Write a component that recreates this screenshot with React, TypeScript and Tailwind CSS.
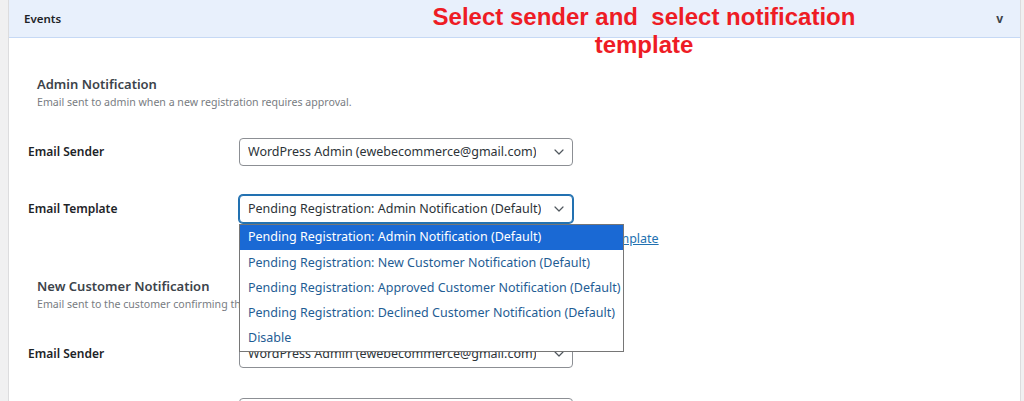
import { ChevronDown } from "lucide-react";

const templates = [
  "Pending Registration: Admin Notification (Default)",
  "Pending Registration: New Customer Notification (Default)",
  "Pending Registration: Approved Customer Notification (Default)",
  "Pending Registration: Declined Customer Notification (Default)",
  "Disable",
];

const font = { fontFamily: '"Noto Sans", "Open Sans", sans-serif' };

function Select({
  value,
  focused = false,
  children,
}: {
  value: string;
  focused?: boolean;
  children?: React.ReactNode;
}) {
  return (
    <div className="relative">
      <div
        className={`flex h-[28px] w-[334px] items-center justify-between rounded-[4px] border bg-white pr-[5px] pl-[8px] text-[12.5px] text-[#2c3338] ${
          focused ? "border-[#2271b1] shadow-[0_0_0_1px_#2271b1]" : "border-[#8c8f94]"
        }`}
      >
        <span className="truncate">{value}</span>
        <ChevronDown size={16} strokeWidth={1.8} className="shrink-0 text-[#50575e]" />
      </div>
      {children}
    </div>
  );
}

function Row({
  label,
  className = "",
  children,
}: {
  label: string;
  className?: string;
  children: React.ReactNode;
}) {
  return (
    <div className={`flex items-center ${className}`}>
      <div className="w-[211px] text-[12px] font-semibold text-[#1d2327]">{label}</div>
      {children}
    </div>
  );
}

function SectionHeading({ title, text }: { title: string; text: string }) {
  return (
    <div className="pl-[9px]">
      <h3 className="text-[13px] leading-[20px] font-semibold text-[#3c434a]">{title}</h3>
      <p className="text-[10.6px] leading-[16px] text-[#787c82]">{text}</p>
    </div>
  );
}

export default function App() {
  return (
    <div className="relative h-[401px] overflow-hidden bg-[#f0f0f1] pl-[8px]" style={font}>
      <div className="h-full w-[1013px] border-x border-[#dcdcde] bg-white">
        <div className="flex h-[38px] items-center justify-between border-b border-[#c6d9f5] bg-[#e8f0fc] pr-[17px] pl-[15px]">
          <span className="text-[11.5px] font-semibold text-[#1d2327]">Events</span>
          <span className="text-[12px] font-bold text-[#3c434a]">v</span>
        </div>

        <div className="px-[19px] pt-[36px]">
          <SectionHeading
            title="Admin Notification"
            text="Email sent to admin when a new registration requires approval."
          />
          <Row label="Email Sender" className="mt-[28px]">
            <Select value="WordPress Admin (ewebecommerce@gmail.com)" />
          </Row>
          <Row label="Email Template" className="mt-[29px]">
            <Select value={templates[0]} focused>
              <ul className="absolute top-[29px] left-0 z-10 w-[385px] border border-[#767676] bg-white text-[12.5px] text-[#1f5d94]">
                {templates.map((t, i) => (
                  <li
                    key={t}
                    className={`flex h-[25.3px] items-center pl-[8px] whitespace-nowrap ${
                      i === 0 ? "bg-[#1a69d4] text-white" : ""
                    }`}
                  >
                    {t}
                  </li>
                ))}
              </ul>
            </Select>
          </Row>
          <p className="mt-[7px] pl-[211px] text-[12.5px] leading-[18px] whitespace-nowrap text-[#646970]">
            Choose which template is sent with this notification, or{" "}
            <a href="#" className="text-[#2271b1] underline">
              edit its template
            </a>
          </p>

          <div className="mt-[28px]">
            <SectionHeading
              title="New Customer Notification"
              text="Email sent to the customer confirming their registration is pending approval."
            />
          </div>
          <Row label="Email Sender" className="mt-[28px]">
            <Select value="WordPress Admin (ewebecommerce@gmail.com)" />
          </Row>
          <Row label="Email Template" className="mt-[30px]">
            <Select value={templates[1]} />
          </Row>
        </div>
      </div>

      <div
        className="pointer-events-none absolute top-[3px] left-[344px] w-[600px] text-center text-[24px] leading-[28px] font-bold text-[#ee1c25]"
        style={{ fontFamily: '"Liberation Sans", Arial, sans-serif' }}
      >
        Select sender and&nbsp; select notification
        <br />
        template
      </div>
    </div>
  );
}
